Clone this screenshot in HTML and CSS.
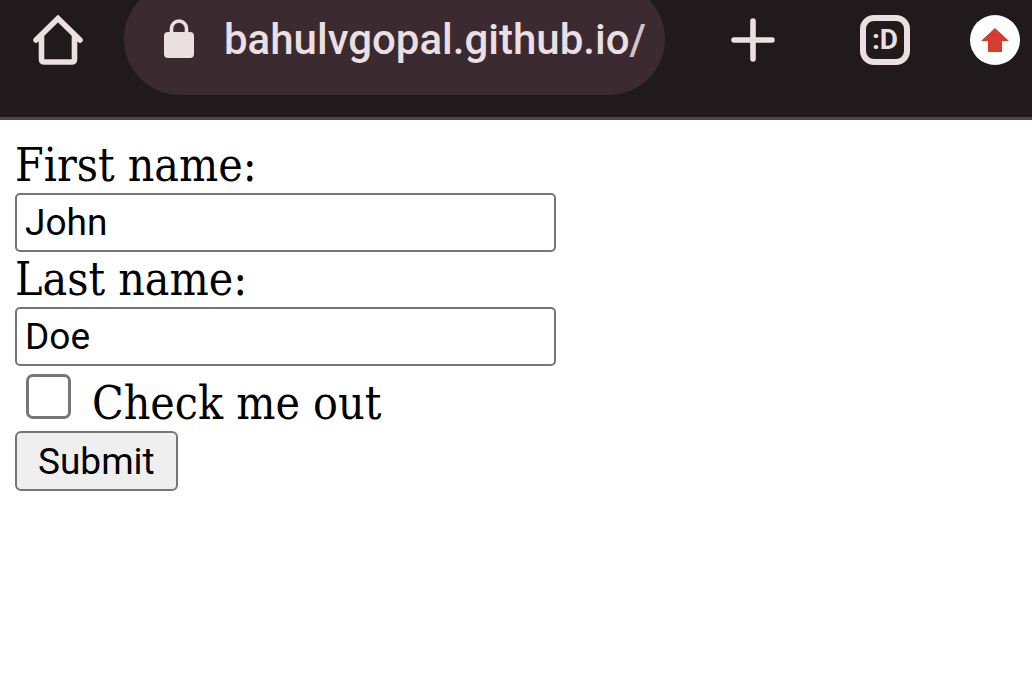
FILE: index.html
```html
<!DOCTYPE html>
<html lang="en">
<head>
<meta charset="utf-8">
<meta name="viewport" content="width=device-width, initial-scale=1">
<title>Form</title>
<link rel="stylesheet" href="styles.css">
</head>
<body>
<header class="toolbar">
  <button class="tool" type="button" aria-label="Home">
    <svg class="icon" viewBox="0 0 50 50"><path d="M3 25 25 3.500 47 25M8.500 21V44Q8.500 47 11.500 47H38.500Q41.500 47 41.500 44V21" fill="none" stroke="currentColor" stroke-width="5.600" stroke-linecap="round"/></svg>
  </button>
  <div class="address">
    <svg class="lock" viewBox="0 0 30 40" aria-hidden="true"><rect y="13" width="30" height="26" rx="4" fill="currentColor"/><path d="M7.500 15V9.500a7.500 7.500 0 0 1 15 0V15" fill="none" stroke="currentColor" stroke-width="3.600"/></svg>
    <a class="url" href="#">bahulvgopal.github.io<span class="slash">/</span></a>
  </div>
  <div class="actions">
    <button class="tool" type="button" aria-label="New tab">
      <svg class="icon" viewBox="0 0 50 50"><path d="M25 6V44M6 25H44" fill="none" stroke="currentColor" stroke-width="5.600" stroke-linecap="round"/></svg>
    </button>
    <button class="tool tabs" type="button" aria-label="Tabs">:D</button>
    <button class="tool update" type="button" aria-label="Update">
      <svg class="icon" viewBox="0 0 50 50"><path d="M25 13 39 26H32V37H18V26H11Z" fill="#d53d2e"/></svg>
    </button>
  </div>
</header>
<main>
  <form class="form">
    <label class="label" for="fname">First name:</label>
    <input class="field" id="fname" type="text" value="John">
    <label class="label" for="lname">Last name:</label>
    <input class="field" id="lname" type="text" value="Doe">
    <div class="check-row">
      <input class="check" id="check" type="checkbox">
      <label class="check-label" for="check">Check me out</label>
    </div>
    <button class="submit" type="button">Submit</button>
  </form>
</main>
</body>
</html>
```
FILE: styles.css
```css
* {
  box-sizing: border-box;
}

body {
  margin: 0;
  background: #fff;
  color: #000;
  font-family: "DejaVu Serif Condensed", "Noto Serif", "DejaVu Serif", serif;
  font-size: 46px;
}

.toolbar {
  display: flex;
  align-items: flex-start;
  overflow: hidden;
  padding: 0 12px 22px 33px;
  border-bottom: 3px solid #54434a;
  background: #201a1c;
  color: #ebdfe2;
}

.tool {
  flex: none;
  width: 50px;
  height: 50px;
  margin-top: 15px;
  padding: 0;
  border: 0;
  background: none;
  color: inherit;
}

.icon {
  display: block;
  width: 50px;
  height: 50px;
}

.address {
  display: flex;
  flex: 1;
  align-items: center;
  gap: 30px;
  min-width: 0;
  height: 112px;
  margin: -17px 63px 0 41px;
  padding: 0 20px 0 40px;
  border-radius: 56px;
  background: #3b2b30;
}

.lock {
  flex: none;
  width: 30px;
  height: 40px;
}

.url {
  padding-top: 2px;
  color: inherit;
  font: 500 42px/50px Roboto, sans-serif;
  text-decoration: none;
  white-space: nowrap;
}

.slash {
  color: #d6c2c8;
}

.actions {
  display: flex;
  flex: none;
}

.tabs {
  margin-left: 82px;
  border: 6px solid currentColor;
  border-radius: 14px;
  font: 700 28px/36px "Liberation Sans Narrow", Roboto, sans-serif;
}

.update {
  margin-left: 60px;
  border-radius: 50%;
  background: #fff;
}

.form {
  display: flex;
  flex-direction: column;
  align-items: flex-start;
  padding: 18px 15px;
}

.label {
  line-height: 55px;
}

.field {
  width: 54%;
  height: 59px;
  padding: 0 8px;
  border: 2px solid #767676;
  border-radius: 5px;
  background: #fff;
  color: #000;
  font: 37px Roboto, sans-serif;
}

.check-row {
  display: flex;
  align-items: flex-start;
  gap: 21px;
  height: 65px;
  padding: 8px 11px 0;
}

.check {
  width: 45px;
  height: 45px;
  margin: 0;
  border: 3px solid #767676;
  border-radius: 7px;
  background: #fff;
  appearance: none;
}

.check:checked {
  background: #0075ff;
}

.check-label {
  line-height: 58px;
}

.submit {
  height: 60px;
  padding: 0 21px;
  border: 2px solid #767676;
  border-radius: 6px;
  background: #efefef;
  color: #000;
  font: 37px Roboto, sans-serif;
}
```
